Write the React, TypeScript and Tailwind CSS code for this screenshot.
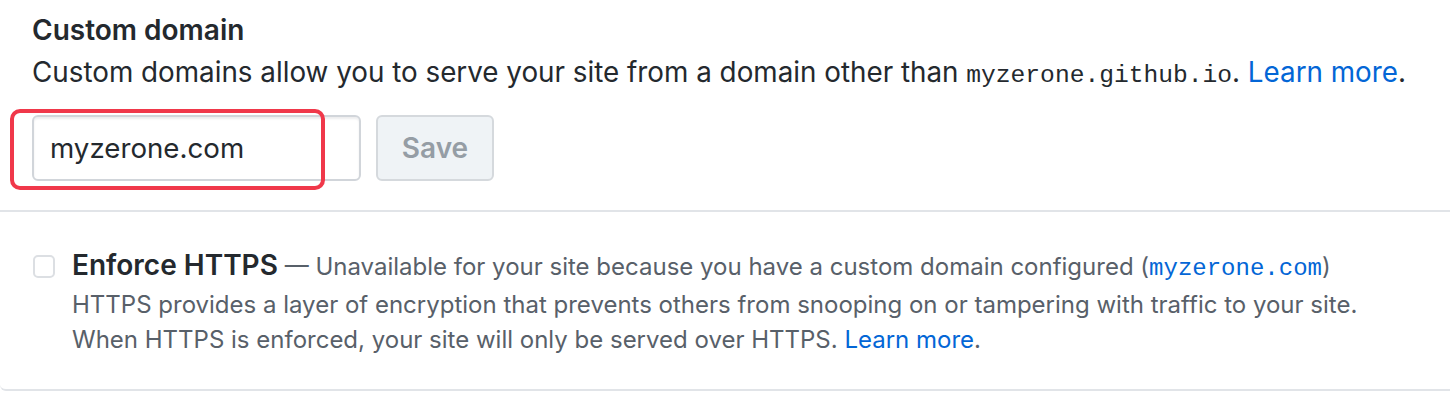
import React from "react";

export default function App() {
  return (
    <div className="w-[1450px] h-[410px] bg-white text-[#24292e] font-['Inter','Liberation_Sans',sans-serif] overflow-hidden">
      <div className="pl-8 pt-[11px] h-[210px]">
        <h3 className="text-[28px] font-semibold leading-[38px]">Custom domain</h3>
        <p className="text-[27.8px] leading-[38px] mt-[4px]">
          Custom domains allow you to serve your site from a domain other than{" "}
          <code className="font-['Liberation_Mono',monospace] text-[24.6px]">myzerone.github.io</code>.{" "}
          <a className="text-[#0366d6]">Learn more</a>.
        </p>
        <div className="flex items-center mt-[20px]">
          <div className="relative">
            <input
              readOnly
              value="myzerone.com"
              className="w-[329px] h-[66px] rounded-[6px] border-2 border-[#d1d5da] bg-white px-[16px] text-[27.7px] text-[#24292e] shadow-[inset_0_2px_2px_rgba(27,31,35,0.075)] outline-none font-['Inter',sans-serif]"
            />
            <div className="absolute left-[-22px] top-[-6px] w-[315px] h-[81px] rounded-[10px] border-[4px] border-[#f0384a] pointer-events-none" />
          </div>
          <button className="ml-[15px] w-[118px] h-[66px] rounded-[6px] border-2 border-[#d5d9dd] bg-[#eff3f6] text-[28px] font-semibold text-[#959da5] font-['Inter',sans-serif]">
            Save
          </button>
        </div>
      </div>
      <div className="h-[181px] border-y-2 border-[#e1e4e8] rounded-bl-[6px] flex pl-[33px] pt-[42px]">
        <div className="w-[22px] h-[23px] rounded-[5px] border-2 border-[#dcdfe3] bg-white shrink-0 mt-[1px]" />
        <div className="ml-[17px] text-[24px] leading-[35.5px] text-[#586069]">
          <div className="-mt-[6px]">
            <span className="text-[28px] font-semibold text-[#24292e]">Enforce HTTPS</span> — Unavailable for your site because you have a custom domain configured (
            <code className="font-['Liberation_Mono',monospace] text-[#0366d6]">myzerone.com</code>)
          </div>
          <div>HTTPS provides a layer of encryption that prevents others from snooping on or tampering with traffic to your site.</div>
          <div>
            When HTTPS is enforced, your site will only be served over HTTPS. <a className="text-[#0366d6]">Learn more</a>.
          </div>
        </div>
      </div>
    </div>
  );
}
